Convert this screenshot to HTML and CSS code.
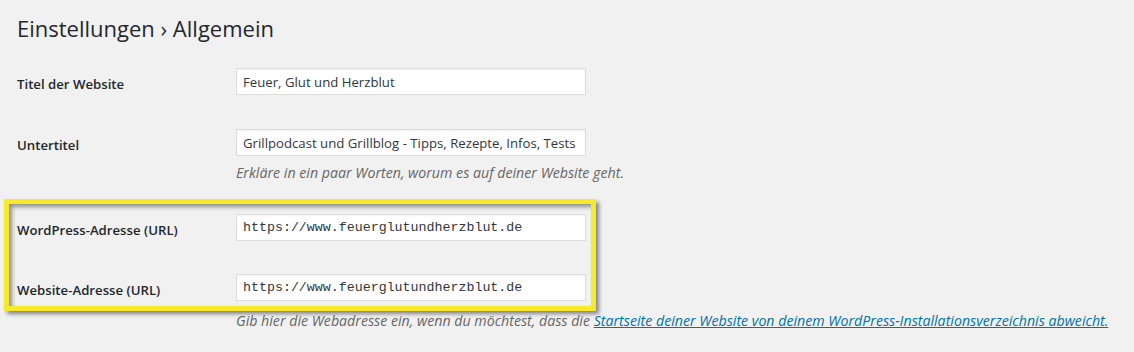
FILE: index.html
```html
<!DOCTYPE html>
<html lang="de">
<head>
  <meta charset="UTF-8" />
  <title>Allgemeine Einstellungen</title>
  <link rel="stylesheet" href="styles.css">
</head>
<body>
  <div class="wrap">
    <h1>Einstellungen › Allgemein</h1>

    <div class="form-row">
      <label class="row-label" for="blogname">Titel der Website</label>
      <div class="row-field">
        <input class="text-input" id="blogname" type="text" value="Feuer, Glut und Herzblut">
      </div>
    </div>

    <div class="form-row">
      <label class="row-label" for="blogdescription">Untertitel</label>
      <div class="row-field">
        <input class="text-input" id="blogdescription" type="text" value="Grillpodcast und Grillblog - Tipps, Rezepte, Infos, Tests">
        <p class="description">Erkläre in ein paar Worten, worum es auf deiner Website geht.</p>
      </div>
    </div>

    <!-- markierter Bereich -->
    <div class="highlight">
      <div class="form-row first">
        <label class="row-label" for="siteurl">WordPress-Adresse (URL)</label>
        <div class="row-field">
          <input class="text-input code" id="siteurl" type="url" value="https://www.feuerglutundherzblut.de">
        </div>
      </div>
      <div class="form-row last">
        <label class="row-label" for="home">Website-Adresse (URL)</label>
        <div class="row-field">
          <input class="text-input code" id="home" type="url" value="https://www.feuerglutundherzblut.de">
        </div>
      </div>
    </div>

    <p class="description after-box">Gib hier die Webadresse ein, wenn du möchtest, dass die <a href="#">Startseite deiner Website von deinem WordPress-Installationsverzeichnis abweicht.</a></p>
  </div>
</body>
</html>
```

FILE: styles.css
```css
body {
  margin: 0;
  background-color: #f1f1f1;
  color: #23282d;
  font-family: 'Open Sans', sans-serif;
}

.wrap {
  padding-left: 17px;
}

h1 {
  margin: 0 0 7px;
  padding-top: 12px;
  font-size: 22px;
  font-weight: 400;
  line-height: 32px;
}

.form-row {
  display: flex;
  align-items: flex-start;
  padding: 17px 0;
}

.row-label {
  width: 219px;
  flex-shrink: 0;
  padding-top: 6px;
  font-size: 13.2px;
  font-weight: 600;
  line-height: 21px;
  color: #23282d;
}

.row-field {
  display: flex;
  flex-direction: column;
}

.text-input {
  box-sizing: border-box;
  width: 350px;
  height: 27px;
  margin: 0;
  padding: 0 6px;
  border: 1px solid #dddddd;
  background: #ffffff;
  color: #32373c;
  font-family: 'Open Sans', sans-serif;
  font-size: 13.2px;
  box-shadow: inset 0 1px 2px rgba(0, 0, 0, 0.05);
}

.text-input.code {
  font-family: 'Liberation Mono', monospace;
  font-size: 13.3px;
}

.description {
  margin: 8px 0 0;
  font-size: 14.2px;
  font-style: italic;
  line-height: 18px;
  color: #666666;
}

.description a {
  color: #0073aa;
}

/* gelber Rahmen */
.highlight {
  width: 592px;
  box-sizing: border-box;
  margin: 0 0 0 -13px;
  padding: 0 0 0 8px;
  border: 5px solid #f7e92c;
  box-shadow: 3px 3px 4px rgba(0, 0, 0, 0.45), inset 3px 3px 4px rgba(0, 0, 0, 0.4);
}

.form-row.first {
  padding-top: 10px;
  padding-bottom: 16px;
}

.form-row.last {
  padding-top: 17px;
  padding-bottom: 5px;
}

.after-box {
  margin: 1px 0 0 219px;
}
```
